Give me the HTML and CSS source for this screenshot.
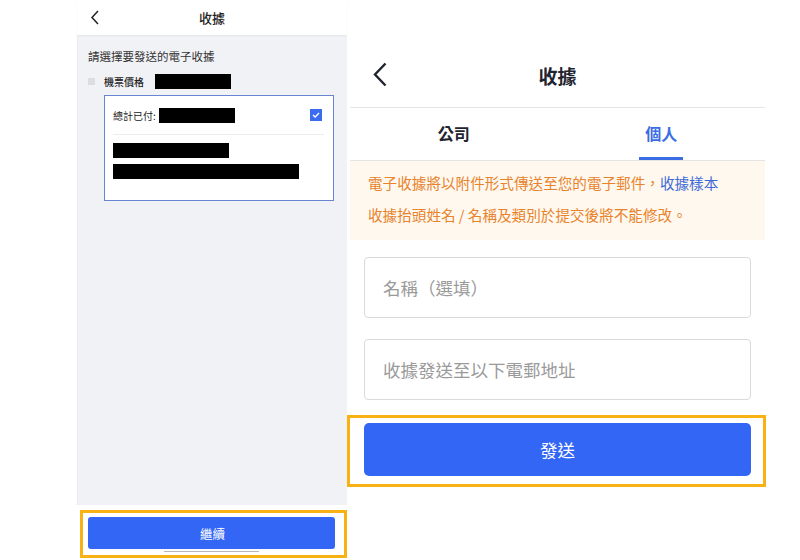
FILE: index.html
```html
<!DOCTYPE html>
<html lang="zh-Hant">
<head>
    <meta charset="UTF-8">
    <meta name="viewport" content="width=device-width, initial-scale=1.0">
    <title>收據</title>
    <link rel="stylesheet" href="styles.css">
</head>
<body>
    <div class="page">
        <div class="phone-small">
            <div class="small-header">
                <svg class="small-back" width="10" height="15" viewBox="0 0 10 15"><path d="M8 1 L2 7.5 L8 14" fill="none" stroke="#222" stroke-width="1.5"/></svg>
                <span class="small-title">收據</span>
                <span></span>
            </div>
            <div class="small-body">
                <p class="small-hint">請選擇要發送的電子收據</p>
                <div class="ticket-row">
                    <span class="tiny-box"></span>
                    <span class="ticket-label">機票價格</span>
                    <span class="redact r-price"></span>
                </div>
                <div class="paid-card">
                    <div class="paid-row">
                        <span class="paid-label">總計已付:</span>
                        <span class="redact r-paid"></span>
                        <span class="blue-check">
                            <svg width="8" height="6" viewBox="0 0 8 6"><path d="M1 3 L3.2 5 L7 1" fill="none" stroke="#fff" stroke-width="1.3"/></svg>
                        </span>
                    </div>
                    <div class="paid-sep"></div>
                    <span class="redact r-line1"></span>
                    <span class="redact r-line2"></span>
                </div>
            </div>
            <div class="small-footer">
                <div class="mark-box small-mark">
                    <button class="btn-small">繼續</button>
                    <div class="home-bar"></div>
                </div>
            </div>
        </div>

        <div class="phone-big">
            <div class="big-header">
                <svg class="big-back" width="16" height="25" viewBox="0 0 16 25"><path d="M13.5 1.5 L3 12.5 L13.5 23.5" fill="none" stroke="#1f2430" stroke-width="2.4"/></svg>
                <span class="big-title">收據</span>
                <span></span>
            </div>
            <div class="tabs">
                <div class="tab">公司</div>
                <div class="tab active">個人</div>
            </div>
            <div class="notice">
                電子收據將以附件形式傳送至您的電子郵件，<a class="sample">收據樣本</a><br>
                收據抬頭姓名 / 名稱及類別於提交後將不能修改。
            </div>
            <div class="form">
                <input class="field" type="text" placeholder="名稱（選填）">
                <input class="field" type="text" placeholder="收據發送至以下電郵地址">
            </div>
            <div class="mark-box big-mark">
                <button class="btn-big">發送</button>
            </div>
        </div>
    </div>
</body>
</html>
```

FILE: styles.css
```css
body { margin: 0; background: #fff; font-family: "Noto Sans CJK TC", "Noto Sans", sans-serif; color: #1f2430; }
.page { display: flex; align-items: flex-start; height: 560px; overflow: hidden; }

/* small phone on the left */
.phone-small { width: 270px; margin-left: 77px; display: flex; flex-direction: column; }
.small-header { height: 35px; display: grid; grid-template-columns: 1fr auto 1fr; align-items: center; background: #fff; box-shadow: 0 1px 2px rgba(0,0,0,0.05); position: relative; z-index: 1; }
.small-back { margin-left: 13px; }
.small-title { font-size: 13px; font-weight: 500; color: #222; }
.small-body { height: 470px; background: #f1f2f6; padding: 0 13px 0 11px; box-sizing: border-box; box-shadow: inset 1px 0 1px rgba(0,0,0,0.03); }
.small-hint { margin: 13px 0 0; font-size: 11.5px; line-height: 16px; color: #333; }
.ticket-row { display: flex; align-items: center; height: 16px; margin-top: 9px; }
.tiny-box { width: 7px; height: 7px; background: #dcdde2; }
.ticket-label { margin-left: 9px; font-size: 10px; font-weight: 500; color: #222; }
.redact { display: block; background: #000; }
.r-price { width: 76px; height: 15px; margin-left: 11px; }
.paid-card { margin: 6px 0 0 16px; height: 106px; background: #fff; border: 1px solid #6785d2; box-sizing: border-box; padding: 0 8px; }
.paid-row { display: flex; align-items: center; height: 38px; }
.paid-label { font-size: 10px; color: #222; }
.r-paid { width: 76px; height: 15px; margin-left: 3px; }
.blue-check { margin-left: auto; margin-right: 3px; width: 12px; height: 12px; background: #3b6cf0; display: flex; align-items: center; justify-content: center; }
.paid-sep { height: 1px; background: #ececec; margin-right: 1px; }
.r-line1 { width: 116px; height: 15px; margin-top: 8px; }
.r-line2 { width: 186px; height: 15px; margin-top: 6px; }
.small-footer { height: 55px; background: #fff; padding-top: 5px; box-sizing: border-box; }

/* orange highlight frames */
.mark-box { border: 3px solid #f8b213; box-sizing: border-box; background: #fff; }
.small-mark { width: 267px; height: 48px; margin-left: 3px; padding: 4px 9px 0 5px; }
.btn-small { display: block; width: 100%; height: 32px; border: none; border-radius: 3px; background: #3366f5; color: #fff; font-family: inherit; font-size: 12.5px; padding: 0 0 0 2px; }
.home-bar { width: 95px; height: 1px; background: #b9b9b9; margin: 2px auto 0; }

/* big phone on the right */
.phone-big { width: 415px; margin-left: 3px; padding-top: 40px; }
.big-header { height: 68px; box-sizing: border-box; padding-top: 4px; display: grid; grid-template-columns: 1fr auto 1fr; align-items: center; border-bottom: 1px solid #e4e4e6; }
.big-back { margin-left: 22px; margin-top: -2px; }
.big-title { font-size: 19px; font-weight: 700; color: #1f2430; }
.tabs { display: grid; grid-template-columns: 1fr 1fr; height: 52px; border-bottom: 1px solid #e4e4e6; }
.tab { display: flex; align-items: center; justify-content: center; font-size: 16px; font-weight: 600; color: #1f2430; position: relative; padding-bottom: 3px; }
.tab.active { color: #3a6de3; }
.tab.active::after { content: ""; position: absolute; bottom: 0; left: 50%; margin-left: -22px; width: 44px; height: 3px; background: #3a6de3; }
.notice { background: #fff8ef; color: #e8832c; font-size: 14.6px; line-height: 32px; padding: 6px 0 9px 18px; white-space: nowrap; }
.sample { color: #3d6ad8; }
.form { display: flex; flex-direction: column; gap: 21px; padding: 17px 14px 0; }
.field { height: 61px; border: 1px solid #dadada; border-radius: 4px; padding: 0 0 0 18px; font-family: inherit; font-size: 17.5px; box-sizing: border-box; outline: none; }
.field::placeholder { color: #9a9a9a; }
.big-mark { margin: 15px -1px 0 -3px; padding: 5px 12px 8px 14px; }
.btn-big { display: block; width: 100%; height: 53px; border: none; border-radius: 5px; background: #3366f5; color: #fff; font-family: inherit; font-size: 17.5px; }
```
